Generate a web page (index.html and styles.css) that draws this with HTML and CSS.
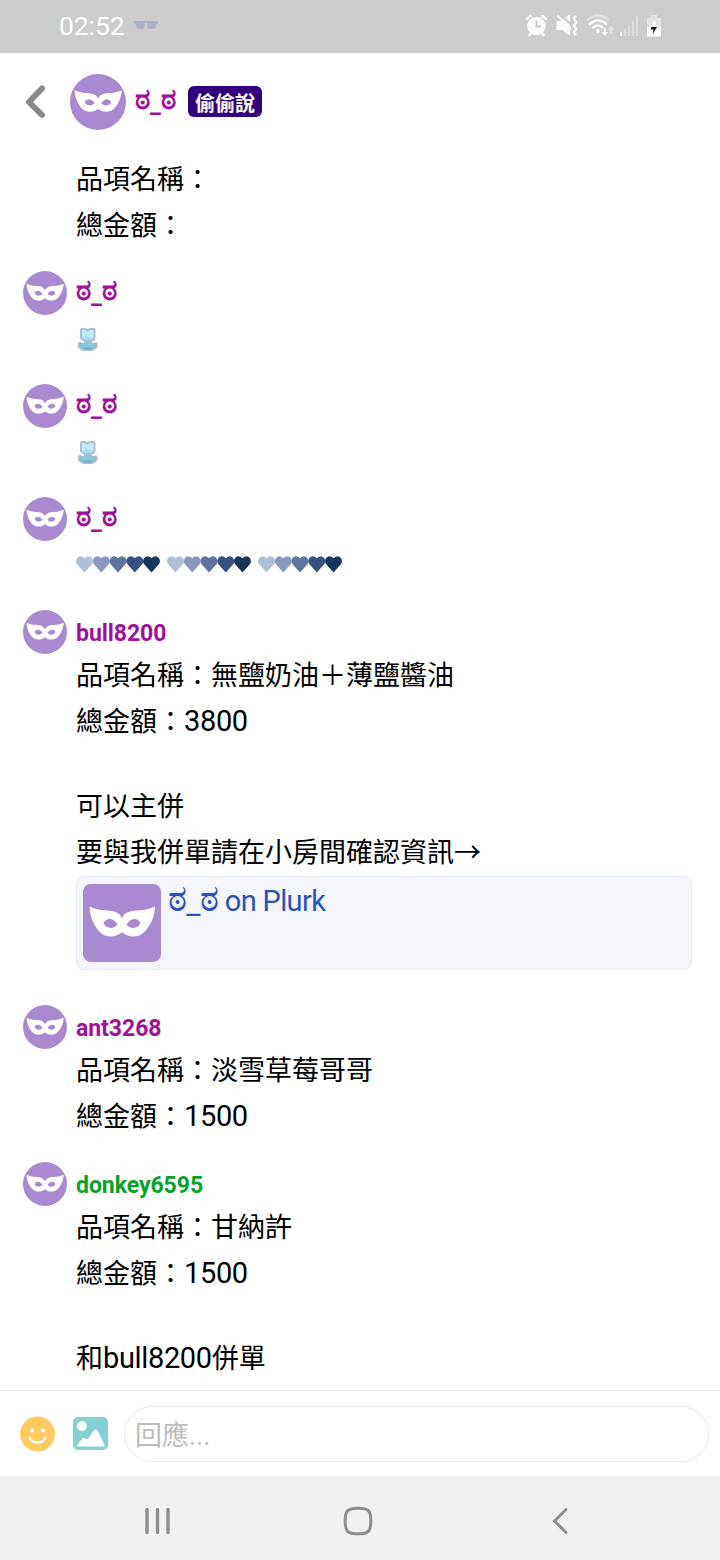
FILE: index.html
```
<!DOCTYPE html>
<html lang="zh-Hant">
<head>
<meta charset="utf-8">
<title>偷偷說</title>
<link rel="stylesheet" href="styles.css">
</head>
<body>
<svg class="defs" aria-hidden="true">
  <symbol id="mask" viewBox="0 0 78 78">
    <rect width="78" height="78" fill="#a98ad0"/>
    <path fill="#fff" fill-rule="evenodd" d="M6.5 22.5C14 26.5 22 26 29 27C34.500 28 37.500 30.500 39 34.300C40.500 30.500 43.500 28 49 27C56 26 64 26.500 72 22.500C72 33 66 45 59 50C53 54 44 53 39 48.300C34 53 25 54 19 50C12 45 6.500 33 6.500 22.500ZM20.500 39C23 34 30 33 34.500 40.500C31 45.500 23 45 20.500 39ZM57.500 39C55 34 48 33 43.500 40.500C47 45.500 55 45 57.500 39Z"/>
  </symbol>
  <symbol id="tulip" viewBox="0 0 24 24">
    <path fill="#a9bcda" d="M4 2Q4 0 6 0H9L11.500 1L14 0H17Q19.500 0 19.500 2V10Q19 13 16 13.500V15H18Q21.500 13 21.500 16V19Q19 22 16 23H7Q3 21 2 19V15Q4 13 7 15H8V13.500Q5 13 4 10Z"/>
    <path fill="#c3edf5" d="M6 2H9.500L11.700 4L14 2H17.500V10L15 12H8.500L6 10Z"/>
    <path fill="#a6deeb" d="M9.500 4L11 8L15.500 10L15 12H8.500L7 10L9.500 8Z"/>
    <path fill="#8ac8d9" d="M10 12H13.500V17.500L17 15.500H20V18.500L16 21H7L3.500 18V15.500H6.500L10 17.500Z"/>
    <path fill="#6aaec4" d="M7.500 19.500H16L15 21.500H8.500Z"/>
  </symbol>
  <symbol id="heart" viewBox="0 0 18 17">
    <path d="M4.500 .3Q7.500 .3 9 2.300Q10.500 .3 13.500 .3Q17.500 1.500 17.500 5.500Q17.300 7.500 15.500 9.300L9 16.500L2.500 9.300Q.7 7.500 .5 5.500Q.5 1.500 4.500 .3Z"/>
  </symbol>
  <symbol id="hearts" viewBox="0 0 84 17">
    <use href="#heart" x="-.5" width="18" height="17" fill="#b0bfd8"/>
    <use href="#heart" x="16.300" width="18" height="17" fill="#8899bd"/>
    <use href="#heart" x="33" width="18" height="17" fill="#5d759e"/>
    <use href="#heart" x="49.800" width="18" height="17" fill="#36507f"/>
    <use href="#heart" x="66.500" width="18" height="17" fill="#17365b"/>
  </symbol>
</svg>
<div class="screen">
  <div class="status">
    <span class="clock">02:52</span>
    <svg class="shades" width="24" height="9" viewBox="0 0 24 9"><path fill="#aab0c6" d="M0 0H24V2L22.500 3L21 7.500Q20.500 8 19 8H16Q14.500 8 14 7L12.800 2H11.200L10 7Q9.500 8 8 8H5Q3.500 8 3 7.500L1.500 3L0 2Z"/></svg>
    <svg class="sys" width="140" height="24" viewBox="525 13 140 24" fill="none" stroke="#fafafa">
      <circle cx="536.500" cy="26" r="9.300" fill="#fafafa" stroke="none"/>
      <path stroke-width="2.500" stroke-linecap="round" d="M527 19L530.500 16M546 19L542.500 16M531 33L529.500 35M542 33L543.500 35"/>
      <path stroke="#ccc" stroke-width="2" d="M536.500 20.500V26.500H541"/>
      <path fill="#fafafa" stroke="none" d="M556.500 21H561L564 19L570 25V35.500L562 30H556.500ZM565 17.500L570 14.500V22Z"/>
      <path stroke-width="2" d="M557.500 15.500L571 29"/>
      <path stroke-width="2.500" stroke-linejoin="round" stroke-linecap="round" d="M575.500 16.500L573.800 19L576.500 22L573.800 25.500L576.500 29L573.800 32L575.500 34.500"/>
      <path stroke="#e3e3e3" stroke-width="2.500" d="M587.500 20Q597.500 11 608.500 20"/>
      <path stroke-width="2.300" stroke-linecap="round" d="M589.500 24Q598 17 606.500 24M593 27.500Q598 23.500 602.500 27.500"/>
      <circle cx="598" cy="31" r="1.900" fill="#fafafa" stroke="none"/>
      <path stroke-width="1.700" d="M604.800 28V35M602.300 32L604.800 34.700L607.300 32"/>
      <path stroke="#e3e3e3" stroke-width="1.700" d="M611.300 34V27M608.800 30L611.300 27.300L613.800 30"/>
      <path stroke="#f4f4f4" stroke-width="2" d="M621 32V36"/>
      <path stroke="#dedede" stroke-width="2" d="M625 29V36M629 25.500V36M633 21V36M637 16V36"/>
      <path fill="#e4e4e4" stroke="none" d="M650.500 15H657V18H661V27H647V18H650.500Z"/>
      <path fill="#fff" stroke="none" d="M647 27H661V36.500H647Z"/>
      <path fill="#fff" stroke="none" d="M655 20L650 27H654L656 23Z"/>
      <path fill="#111" stroke="none" d="M651.500 27H657L652.500 34.500L653.500 29.500H650.500Z"/>
    </svg>
  </div>
  <header class="top">
    <svg class="back" width="20" height="34" viewBox="0 0 20 34"><path d="M17 3.500L4 17L17 30" fill="none" stroke="#8a8a8a" stroke-width="6" stroke-linecap="round" stroke-linejoin="round"/></svg>
    <svg class="avatar big"><use href="#mask"/></svg>
    <span class="name"><span class="face">ಠ<i>_</i>ಠ</span></span>
    <span class="tag">偷偷說</span>
  </header>
  <main class="feed">
    <div class="lead"><p>品項名稱：</p><p>總金額：</p></div>
    <article class="post">
      <svg class="avatar"><use href="#mask"/></svg>
      <div class="body"><div class="name"><span class="face">ಠ<i>_</i>ಠ</span></div><div class="emoji"><svg width="24" height="24"><use href="#tulip"/></svg></div></div>
    </article>
    <article class="post">
      <svg class="avatar"><use href="#mask"/></svg>
      <div class="body"><div class="name"><span class="face">ಠ<i>_</i>ಠ</span></div><div class="emoji"><svg width="24" height="24"><use href="#tulip"/></svg></div></div>
    </article>
    <article class="post">
      <svg class="avatar"><use href="#mask"/></svg>
      <div class="body"><div class="name"><span class="face">ಠ<i>_</i>ಠ</span></div><div class="emoji row"><svg width="84" height="17"><use href="#hearts"/></svg><svg width="84" height="17"><use href="#hearts"/></svg><svg width="84" height="17"><use href="#hearts"/></svg></div></div>
    </article>
    <article class="post">
      <svg class="avatar"><use href="#mask"/></svg>
      <div class="body">
        <div class="name latin">bull8200</div>
        <p>品項名稱：無鹽奶油＋薄鹽醬油</p><p>總金額：<span class="num">3800</span></p><p class="blank"></p><p>可以主併</p><p>要與我併單請在小房間確認資訊→</p>
        <div class="card"><svg class="thumb"><use href="#mask"/></svg><span class="link"><span class="face">ಠ<i>_</i>ಠ</span> on Plurk</span></div>
      </div>
    </article>
    <article class="post">
      <svg class="avatar"><use href="#mask"/></svg>
      <div class="body"><div class="name latin">ant3268</div><p>品項名稱：淡雪草莓哥哥</p><p>總金額：<span class="num">1500</span></p></div>
    </article>
    <article class="post">
      <svg class="avatar"><use href="#mask"/></svg>
      <div class="body"><div class="name latin green">donkey6595</div><p>品項名稱：甘納許</p><p>總金額：<span class="num">1500</span></p><p class="blank"></p><p>和<span class="num">bull8200</span>併單</p></div>
    </article>
  </main>
  <footer class="compose">
    <svg width="36" height="36" viewBox="0 0 36 36"><circle cx="18.500" cy="18" r="17.500" fill="#ffcb61"/><circle cx="13" cy="14.500" r="2" fill="#fff"/><circle cx="24" cy="14.500" r="2" fill="#fff"/><path d="M10.500 21.500C13 28 24 28 26.500 21.500" fill="none" stroke="#fff" stroke-width="2.200" stroke-linecap="round"/></svg>
    <svg class="pic" width="35" height="34" viewBox="0 0 35 34"><rect width="35" height="33" rx="5" fill="#85d0d2"/><circle cx="9" cy="9" r="5" fill="#fff"/><path d="M4 28L9.500 21.500Q11 20.500 12.500 21.500L14.500 22.500L21 13.500Q23 11 24.800 14L31.500 28Q32 29.500 30.500 29.500H4.500Q3 29.500 4 28Z" fill="#fff"/></svg>
    <div class="field">回應<span class="dots">...</span></div>
  </footer>
  <nav class="nav">
    <svg width="26" height="28" viewBox="0 0 26 28"><path d="M2 2.500V25.500M12.500 2.500V25.500M23 2.500V25.500" stroke="#8d8d8d" stroke-width="3.400" stroke-linecap="round"/></svg>
    <svg width="30" height="30" viewBox="0 0 30 30"><path d="M15 2.200C25.500 2.200 27.800 4.500 27.800 15C27.800 25.500 25.500 27.800 15 27.800C4.500 27.800 2.200 25.500 2.200 15C2.200 4.500 4.500 2.200 15 2.200Z" fill="none" stroke="#8d8d8d" stroke-width="3"/></svg>
    <svg width="18" height="28" viewBox="0 0 18 28"><path d="M15 2.500L3.500 14L15 25.500" fill="none" stroke="#8d8d8d" stroke-width="3" stroke-linecap="round"/></svg>
  </nav>
</div>
</body>
</html>
```
FILE: styles.css
```
* { box-sizing: border-box; }
body { margin: 0; background: #fff; color: #000; font-family: Roboto, "Noto Sans CJK TC", "Noto Sans", sans-serif; }
p { margin: 0; }
svg { display: block; flex: none; }
.defs { position: absolute; width: 0; height: 0; }
.screen { width: 720px; height: 1560px; display: flex; flex-direction: column; overflow: hidden; }
.status { height: 53px; flex: none; background: #ccc; display: flex; align-items: center; padding-left: 59px; }
.clock { width: 75px; padding-bottom: 2px; font-size: 26.5px; letter-spacing: -0.1px; color: #fff; }
.shades { margin-bottom: 3px; }
.sys { margin-left: 367px; margin-bottom: 3px; }
.top { height: 103px; flex: none; display: flex; align-items: flex-start; padding: 21px 0 0 25px; }
.back { margin-top: 11px; margin-right: 25px; }
.avatar { width: 44px; height: 44px; border-radius: 50%; }
.avatar.big { width: 56px; height: 56px; margin-right: 9px; }
.name { color: #a0109c; font-weight: 700; font-size: 23px; line-height: 44px; height: 42px; white-space: nowrap; }
.top .name { width: 53px; margin-top: 6px; }
.face { font-size: 1.27em; line-height: 1; }
.face i { display: inline-block; font-style: normal; font-size: 0.84em; transform: translateY(3px); }
.green { color: #0aa12a; }
.name.latin { line-height: 42px; padding-top: 3px; letter-spacing: -0.05px; }
.tag { width: 74px; height: 31px; margin-top: 12px; border-radius: 6px; background: #32007c; color: #fff; font-size: 20px; font-weight: 700; line-height: 36px; text-align: center; }
.feed { height: 1234px; flex: none; overflow: hidden; }
.lead { padding-left: 76px; margin-bottom: 23px; }
.lead p, .body p { height: 46px; line-height: 48px; font-size: 27px; white-space: nowrap; }
.body p.blank { height: 39px; }
.num { font-size: 29px; line-height: 1; letter-spacing: -0.35px; }
.post { display: flex; align-items: flex-start; gap: 9px; padding-left: 23px; margin-bottom: 23px; }
.body { width: 616px; }
.emoji { height: 48px; display: flex; align-items: center; padding-top: 6px; }
.row { gap: 7px; padding: 2px 0 0; }
.card { height: 94px; margin: 1px 0 12px; padding: 7px 6px; display: flex; gap: 7px; border: 1px solid #e6ebf8; border-radius: 8px; background: #f4f6fc; }
.thumb { width: 78px; height: 78px; border-radius: 8px; }
.link { height: 34px; margin-top: -2px; font-size: 29px; line-height: 32px; letter-spacing: -0.65px; color: #2d53b4; white-space: nowrap; }
.link .face { font-size: 1.23em; }
.link .face i { font-size: 0.88em; }
.compose { height: 86px; flex: none; border-top: 1px solid #e2e2e2; display: flex; align-items: center; padding-left: 19px; }
.pic { margin-left: 18px; }
.field { width: 585px; height: 56px; margin-left: 16px; border: 1px solid #e8e8e8; border-radius: 28px; padding-left: 10px; font-size: 27px; line-height: 58px; color: #bdbdbd; }
.nav { flex: 1; background: #f1f1f1; display: flex; align-items: center; padding: 5px 0 0 145px; }
.nav svg:nth-child(2) { margin-left: 172px; }
.nav svg:nth-child(3) { margin-left: 178px; }
```
